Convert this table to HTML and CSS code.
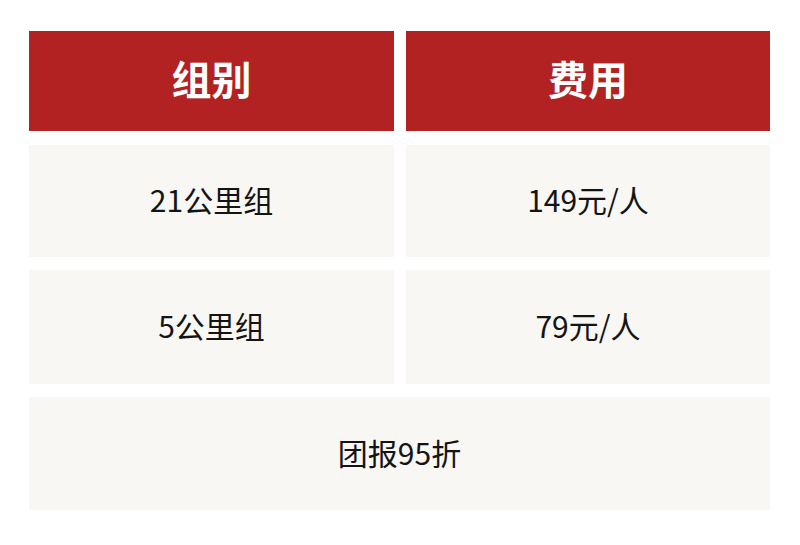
FILE: index.html
```html
<!DOCTYPE html>
<html lang="zh">
<head>
<meta charset="utf-8">
<link rel="stylesheet" href="styles.css">
</head>
<body>
<div class="table">
  <div class="cell head">组别</div>
  <div class="cell head">费用</div>
  <div class="cell">21公里组</div>
  <div class="cell">149元/人</div>
  <div class="cell">5公里组</div>
  <div class="cell">79元/人</div>
  <div class="cell wide">团报95折</div>
</div>
</body>
</html>
```
FILE: styles.css
```css
html, body {
  margin: 0;
  padding: 0;
  background: #ffffff;
}
body {
  width: 800px;
  height: 545px;
  font-family: "Noto Sans CJK SC", "Noto Sans", sans-serif;
}
.table {
  box-sizing: border-box;
  padding: 31px 30px 0 29px;
  display: grid;
  grid-template-columns: 365px 364px;
  grid-template-rows: 101px 112px 114px 113px;
  column-gap: 12px;
  row-gap: 13px;
}
.cell {
  box-sizing: border-box;
  display: flex;
  align-items: center;
  justify-content: center;
  padding-bottom: 4px;
  background: #f8f7f4;
  color: #141414;
  font-size: 30px;
}
.head {
  align-self: start;
  height: 100px;
  padding-bottom: 6px;
  background: #b22222;
  color: #ffffff;
  font-weight: 700;
  font-size: 40px;
}
.wide {
  grid-column: 1 / 3;
}
```
